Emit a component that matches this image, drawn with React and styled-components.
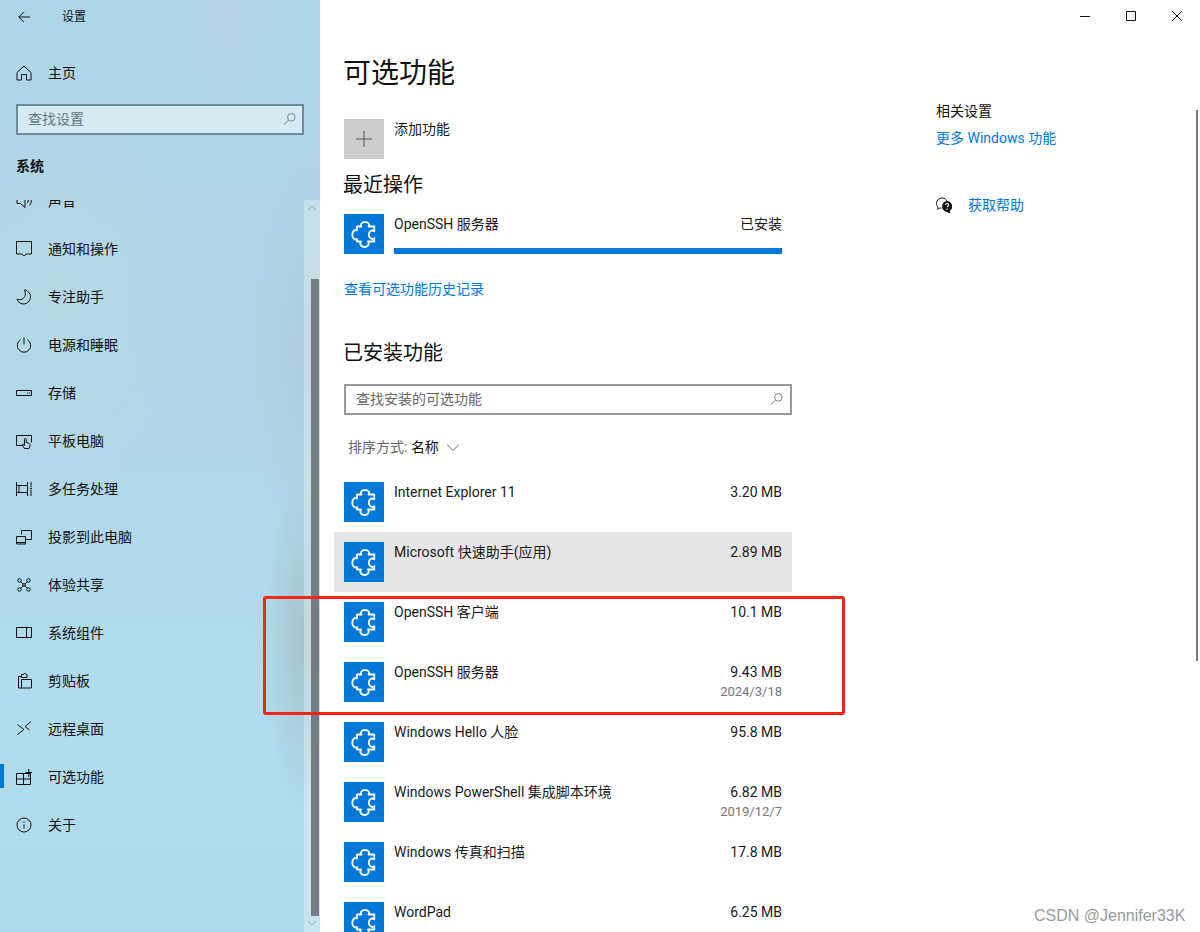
import React from "react";
import styled, { createGlobalStyle } from "styled-components";

const FONT = `Roboto, "Noto Sans CJK SC", sans-serif`;

const Global = createGlobalStyle`
  html, body { margin: 0; padding: 0; background: #fff; }
  body { font-family: ${FONT}; font-size: 14px; line-height: 20px; color: #1a1a1a; }
  * { box-sizing: border-box; }
`;

const Page = styled.div`
  position: relative;
  display: flex;
  width: 1200px;
  height: 932px;
  overflow: hidden;
  background: #fff;
`;

/* ---------- sidebar ---------- */
const Sidebar = styled.aside`
  position: relative;
  display: flex;
  flex-direction: column;
  flex: 0 0 320px;
  height: 932px;
  background:
    radial-gradient(ellipse 45px 90px at 228px 14px, rgba(192, 208, 232, 0.6), rgba(192, 208, 232, 0) 100%),
    radial-gradient(ellipse 40px 170px at 304px 640px, rgba(164, 190, 198, 0.85), rgba(164, 190, 198, 0) 100%),
    radial-gradient(ellipse 60px 200px at 310px 350px, rgba(172, 200, 214, 0.8), rgba(172, 200, 214, 0) 100%),
    radial-gradient(ellipse 120px 200px at 60px 300px, rgba(182, 218, 228, 0.7), rgba(182, 218, 228, 0) 100%),
    linear-gradient(180deg, #aed6e9 0%, #b1d6e8 40%, #afdcee 75%, #aedaec 100%);
`;

const Header = styled.div`
  display: flex;
  align-items: center;
  height: 32px;
  padding: 2px 0 0 18px;
  font-size: 12px;
  color: #111;
`;

const HeaderTitle = styled.span`
  margin-left: 32px;
`;

const NavItem = styled.div`
  position: relative;
  display: flex;
  align-items: center;
  gap: 16px;
  flex: 0 0 48px;
  height: 48px;
  padding-left: 16px;
  color: #111;
  white-space: nowrap;
`;

const ActiveBar = styled.span`
  position: absolute;
  left: 0;
  top: 11px;
  width: 4px;
  height: 24px;
  background: #0078d7;
`;

const HomeItem = styled(NavItem)`
  margin-top: 17px;
`;

const SideSearch = styled.div`
  display: flex;
  align-items: center;
  justify-content: space-between;
  width: 288px;
  height: 31px;
  margin: 7px 0 0 16px;
  padding: 0 6px 2px 10px;
  border: 2px solid #6c8a9b;
  background: rgba(255, 255, 255, 0.48);
  color: #66767f;
`;

const SectionLabel = styled.div`
  margin: 21px 0 0 16px;
  height: 20px;
  font-weight: 700;
  color: #111;
`;

const NavClip = styled.div`
  flex: 1;
  margin-top: 24px;
  overflow: hidden;
`;

const NavList = styled.div`
  display: flex;
  flex-direction: column;
  margin-top: -23px;
`;

const SideTrack = styled.div`
  position: absolute;
  left: 304px;
  top: 200px;
  width: 16px;
  height: 732px;
  background: rgba(240, 246, 248, 0.38);
`;

const SideThumb = styled.div`
  position: absolute;
  left: 7px;
  top: 79px;
  width: 8px;
  height: 637px;
  background: #767d80;
`;

const TrackArrow = styled.svg`
  position: absolute;
  left: 4px;
  top: ${(p) => p.$top}px;
  width: 8px;
  height: 6px;
  fill: none;
  stroke: #93a7b0;
  stroke-width: 0.9;
`;

/* ---------- main ---------- */
const Main = styled.main`
  display: flex;
  flex-direction: column;
  flex: 1;
  height: 932px;
  overflow: hidden;
`;

const TitleBar = styled.div`
  display: flex;
  justify-content: flex-end;
  flex: 0 0 32px;
  height: 32px;
`;

const WinButton = styled.div`
  display: flex;
  align-items: center;
  justify-content: center;
  width: 46px;
  height: 32px;
  color: #111;
`;

const Body = styled.div`
  display: flex;
  gap: 144px;
  padding-left: 24px;
`;

const Content = styled.div`
  display: flex;
  flex-direction: column;
  flex: 0 0 448px;
`;

const PageTitle = styled.h1`
  margin: 22px 0 25px -1px;
  height: 40px;
  font-size: 28px;
  line-height: 40px;
  font-weight: 400;
  color: #111;
`;

const AddRow = styled.div`
  display: flex;
  gap: 10px;
  height: 40px;
`;

const AddTile = styled.div`
  display: flex;
  align-items: center;
  justify-content: center;
  width: 40px;
  height: 40px;
  background: #cccccc;
  color: #555;
`;

const SubTitle = styled.h2`
  margin: ${(p) => p.$top}px 0 0 -1px;
  height: 28px;
  font-size: 20px;
  line-height: 28px;
  font-weight: 400;
  color: #111;
`;

const RecentRow = styled.div`
  display: flex;
  gap: 10px;
  height: 40px;
  margin-top: 15px;
  padding-right: 10px;
`;

const RecentBody = styled.div`
  flex: 1;
`;

const RecentLine = styled.div`
  display: flex;
  justify-content: space-between;
  height: 20px;
`;

const Progress = styled.div`
  height: 6px;
  margin-top: 14px;
  background: #0078d7;
`;

const Link = styled.a`
  display: block;
  color: #0078d7;
  margin-top: ${(p) => p.$top || 0}px;
`;

const Search = styled.div`
  display: flex;
  align-items: center;
  justify-content: space-between;
  height: 31px;
  margin-top: 17px;
  padding: 0 7px 2px 10px;
  border: 2px solid #999;
  color: #666;
`;

const Sort = styled.div`
  display: flex;
  align-items: center;
  gap: 8px;
  height: 20px;
  margin-top: 22px;
  padding-left: 4px;
  color: #666;
`;

const SortValue = styled.span`
  color: #111;
`;

const List = styled.div`
  display: flex;
  flex-direction: column;
  margin: 15px 0 0 -10px;
  width: 458px;
`;

const Row = styled.div`
  display: flex;
  gap: 10px;
  flex: 0 0 60px;
  height: 60px;
  padding: 10px;
  background: ${(p) => (p.$selected ? "#e6e6e6" : "transparent")};
`;

const Tile = styled.div`
  display: flex;
  align-items: center;
  justify-content: center;
  flex: 0 0 40px;
  width: 40px;
  height: 40px;
  background: #0078d7;
`;

const RowName = styled.div`
  flex: 1;
  color: #1a1a1a;
  white-space: nowrap;
`;

const RowMeta = styled.div`
  display: flex;
  flex-direction: column;
  align-items: flex-end;
  color: #1a1a1a;
`;

const RowDate = styled.span`
  font-size: 13px;
  color: #767676;
`;

const Related = styled.div`
  display: flex;
  flex-direction: column;
  padding-top: 69px;
  white-space: nowrap;
`;

const RelatedTitle = styled.div`
  color: #111;
`;

const HelpRow = styled.div`
  display: flex;
  align-items: center;
  gap: 16px;
  height: 20px;
  margin-top: 47px;
  color: #0078d7;
`;

const MainThumb = styled.div`
  position: absolute;
  left: 1196px;
  top: 110px;
  width: 2px;
  height: 551px;
  background: #7a7a7a;
`;

const Annotation = styled.div`
  position: absolute;
  left: 263px;
  top: 596px;
  width: 582px;
  height: 119px;
  border: 3px solid #f5251b;
  border-radius: 3px;
`;

const Watermark = styled.div`
  position: absolute;
  left: 1034px;
  top: 906px;
  font-family: "Liberation Sans", sans-serif;
  font-size: 16px;
  line-height: 20px;
  color: #9a9a9a;
  white-space: nowrap;
`;

/* ---------- icons ---------- */
const Glyph = styled.svg`
  flex: 0 0 auto;
  width: ${(p) => p.$size || 16}px;
  height: ${(p) => p.$size || 16}px;
  fill: none;
  stroke: currentColor;
  stroke-width: 1;
`;

const DarkGlyph = styled(Glyph)`
  color: #111;
`;

const Icon = ({ d, size, view = 16, children }) => (
  <Glyph $size={size} viewBox={`0 0 ${view} ${view}`}>
    {d && <path d={d} />}
    {children}
  </Glyph>
);

const MagnifierIcon = () => (
  <Icon size={13} d="M15 6.500a4.700 4.700 0 1 1-9.400 0a4.700 4.700 0 0 1 9.400 0zM6.900 10L1 15.500" />
);

const Puzzle = () => (
  <svg width="40" height="40" viewBox="0 0 40 40" fill="none" stroke="#fff" strokeWidth="1.8" strokeLinejoin="round">
    <path d="M13 12.500H17.500C15.800 9.800 18 8 21 8C24 8 26.200 9.800 24.500 12.500H30.300V17.300C27.500 15.300 24.800 17.500 24.800 20.700C24.800 23.900 27.500 26 30.300 24.200V27.500H24C25.800 30.500 23.500 33 20.500 33C17.500 33 15.200 30.500 17 27.500H13V25C10.500 26.500 8.300 24 8.300 20.700C8.300 17.500 10.500 15 13 16.500Z" />
  </svg>
);

const icons = {
  sound: <Icon d="M1 5.500h3.500L9 1.500v13L4.500 10.500H1zM11.500 6a3 3 0 0 1 0 4M13.500 3.500a6.500 6.500 0 0 1 0 9" />,
  bell: <Icon d="M.5 .5h15v12.500h-5.500l-2 2l-2-2H.5z" />,
  moon: <Icon d="M8.500 .8c3 .6 6 3.300 6 7a7 7 0 0 1-13.600 2.500c3.400 1.300 7.600-.4 8.300-4c.3-2-.1-4-.7-5.500z" />,
  power: <Icon d="M8 .5v7M4.500 2.800a6.700 6.700 0 1 0 7 0" />,
  storage: <Icon d="M.5 5.500h15v5h-15zM11 8h1M13 8h1" />,
  tablet: <Icon d="M7 12.500H.5v-10h15v7M8.500 15.500l-2-3.500c-.4-.9.7-1.400 1.300-.6l.7 1V6.300c0-1.200 1.700-1.200 1.700 0v3.200l2.500.6c1 .3 1.300.8 1.300 1.700c0 1.500-.5 2.700-1 3.700z" />,
  multi: (
    <Icon d="M.5 1v14M.5 4.500h11M.5 11.500h11M3 4.500v7M11.500 1v14M15 1v5M15 9v6">
      <circle cx="15" cy="7.500" r=".6" fill="currentColor" />
    </Icon>
  ),
  project: <Icon d="M5.500 5.500v-4h10v9H10M.5 7.500h9v6h-9zM.5 13.500v1.500h9v-1.500" />,
  share: (
    <Icon d="M5 5l2 2M11 5L9 7M5 11l2-2M11 11L9 9">
      <circle cx="3.500" cy="3.500" r="1.700" />
      <circle cx="12.500" cy="3.500" r="1.700" />
      <circle cx="3.500" cy="12.500" r="1.700" />
      <circle cx="12.500" cy="12.500" r="1.700" />
      <circle cx="8" cy="8" r="1.300" />
    </Icon>
  ),
  components: <Icon d="M.5 2.500h15v10H.5zM10.500 2.500v10" />,
  clipboard: <Icon d="M5.500 4.500v-3h2l.5-1h1.500l.5 1h1v3zM5.500 3.500H2.500v11.500h3M5.500 6.500h10v8.500h-10z" />,
  remote: <Icon d="M1.500 3.500L8 8.500L1.500 13.500M15 .5L9 5.500L13.500 9" />,
  optional: <Icon d="M.5 4.500h14V15.500H.5zM7.500 4.500v11M.5 10h14M12.800 0v8M9.500 3.500h6.500" />,
  about: (
    <Icon d="M8 7.500v4M8 4.500v1.300">
      <circle cx="8" cy="8" r="7" />
    </Icon>
  ),
};

const navItems = [
  ["sound", "声音"],
  ["bell", "通知和操作"],
  ["moon", "专注助手"],
  ["power", "电源和睡眠"],
  ["storage", "存储"],
  ["tablet", "平板电脑"],
  ["multi", "多任务处理"],
  ["project", "投影到此电脑"],
  ["share", "体验共享"],
  ["components", "系统组件"],
  ["clipboard", "剪贴板"],
  ["remote", "远程桌面"],
  ["optional", "可选功能", true],
  ["about", "关于"],
];

const features = [
  { name: "Internet Explorer 11", size: "3.20 MB" },
  { name: "Microsoft 快速助手(应用)", size: "2.89 MB", selected: true },
  { name: "OpenSSH 客户端", size: "10.1 MB" },
  { name: "OpenSSH 服务器", size: "9.43 MB", date: "2024/3/18" },
  { name: "Windows Hello 人脸", size: "95.8 MB" },
  { name: "Windows PowerShell 集成脚本环境", size: "6.82 MB", date: "2019/12/7" },
  { name: "Windows 传真和扫描", size: "17.8 MB" },
  { name: "WordPad", size: "6.25 MB" },
];

export default function App() {
  return (
    <Page>
      <Global />
      <Sidebar>
        <Header>
          <Icon size={12} view={12} d="M12 6H.8M6 .8L.8 6L6 11.200" />
          <HeaderTitle>设置</HeaderTitle>
        </Header>
        <HomeItem>
          <Icon d="M8 1L1 7.500v7.500h4.500V9.500h5V15H15V7.500z" />
          <span>主页</span>
        </HomeItem>
        <SideSearch>
          <span>查找设置</span>
          <MagnifierIcon />
        </SideSearch>
        <SectionLabel>系统</SectionLabel>
        <NavClip>
          <NavList>
            {navItems.map(([icon, label, active]) => (
              <NavItem key={label}>
                {active && <ActiveBar />}
                {icons[icon]}
                <span>{label}</span>
              </NavItem>
            ))}
          </NavList>
        </NavClip>
        <SideTrack>
          <TrackArrow $top={5} viewBox="0 0 8 6">
            <path d="M0 5L4 1L8 5" />
          </TrackArrow>
          <TrackArrow $top={720} viewBox="0 0 8 6">
            <path d="M0 1L4 5L8 1" />
          </TrackArrow>
          <SideThumb />
        </SideTrack>
      </Sidebar>

      <Main>
        <TitleBar>
          <WinButton>
            <Icon size={10} view={10} d="M0 5.500H10" />
          </WinButton>
          <WinButton>
            <Icon size={10} view={10} d="M.5 .5h9v9h-9z" />
          </WinButton>
          <WinButton>
            <Icon size={10} view={10} d="M0 0L10 10M10 0L0 10" />
          </WinButton>
        </TitleBar>
        <Body>
          <Content>
            <PageTitle>可选功能</PageTitle>
            <AddRow>
              <AddTile>
                <Icon size={16} d="M8 0v16M0 8h16" />
              </AddTile>
              <span>添加功能</span>
            </AddRow>
            <SubTitle $top={12}>最近操作</SubTitle>
            <RecentRow>
              <Tile>
                <Puzzle />
              </Tile>
              <RecentBody>
                <RecentLine>
                  <span>OpenSSH 服务器</span>
                  <span>已安装</span>
                </RecentLine>
                <Progress />
              </RecentBody>
            </RecentRow>
            <Link $top={25}>查看可选功能历史记录</Link>
            <SubTitle $top={40}>已安装功能</SubTitle>
            <Search>
              <span>查找安装的可选功能</span>
              <MagnifierIcon />
            </Search>
            <Sort>
              <span>
                排序方式: <SortValue>名称</SortValue>
              </span>
              <Icon size={12} view={12} d="M0 3.500L6 9.500L12 3.500" />
            </Sort>
            <List>
              {features.map((f) => (
                <Row key={f.name} $selected={f.selected}>
                  <Tile>
                    <Puzzle />
                  </Tile>
                  <RowName>{f.name}</RowName>
                  <RowMeta>
                    <span>{f.size}</span>
                    {f.date && <RowDate>{f.date}</RowDate>}
                  </RowMeta>
                </Row>
              ))}
            </List>
          </Content>
          <Related>
            <RelatedTitle>相关设置</RelatedTitle>
            <Link $top={7}>更多 Windows 功能</Link>
            <HelpRow>
              <DarkGlyph $size={16} viewBox="0 0 16 16">
                <path d="M5.500 11H3.500L2 12.500V10C.8 9 .5 7.800 .5 6.500C.5 3.500 2.800 1 6 1C8.500 1 10.500 2.500 11.200 4.500" />
                <path d="M11 4.500a5 5 0 0 1 2.600 9.200V16l-2.800-1.600a5 5 0 0 1 .2-9.900z" fill="#111" />
                <path d="M9.500 7.800c.2-1.600 3.200-1.600 3.200.2c0 1.200-1.500 1.200-1.500 2.300M11.200 11.500v1.200" stroke="#fff" strokeWidth="1.200" />
              </DarkGlyph>
              <span>获取帮助</span>
            </HelpRow>
          </Related>
        </Body>
      </Main>
      <MainThumb />
      <Annotation />
      <Watermark>CSDN @Jennifer33K</Watermark>
    </Page>
  );
}
